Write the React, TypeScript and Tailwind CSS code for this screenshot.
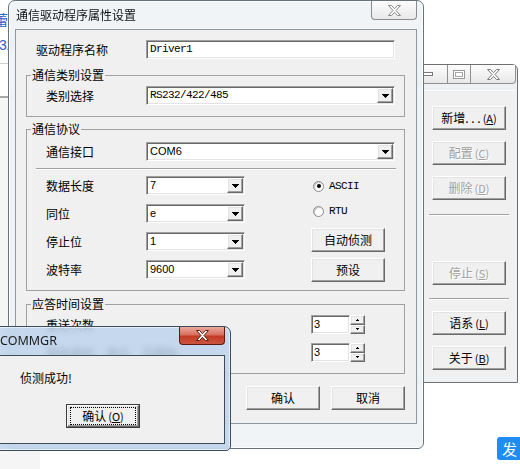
import React from "react";

const cjk = "font-['Noto_Sans_CJK_SC',sans-serif]";
const mono = "font-['Liberation_Mono','Noto_Sans_CJK_SC',monospace] tracking-[-0.6px]";
const ms = "font-['Liberation_Sans','Noto_Sans_CJK_SC',sans-serif]";

const raised =
  "bg-[#f0f0f0] border border-t-white border-l-white border-r-[#696969] border-b-[#696969] shadow-[inset_-1px_-1px_0_#a0a0a0,inset_1px_1px_0_#e3e3e3]";
const sunken =
  "bg-white border border-t-[#a0a0a0] border-l-[#a0a0a0] border-r-white border-b-white shadow-[inset_1px_1px_0_#696969,inset_-1px_-1px_0_#e3e3e3]";

const Mn = ({ k }: { k: string }) => (
  <span className="ml-[2px] text-[11px]">
    (<span className="underline underline-offset-[1px]">{k}</span>)
  </span>
);

const Btn = ({
  children,
  disabled = false,
  className = "",
}: {
  children: React.ReactNode;
  disabled?: boolean;
  className?: string;
}) => (
  <div
    className={`${raised} w-[74px] h-[24px] shrink-0 flex items-center justify-center text-[12px] leading-none ${
      disabled ? "text-[#a0a0a0] [text-shadow:1px_1px_0_#fff]" : "text-black"
    } ${className}`}
  >
    {children}
  </div>
);

const Arrow = () => (
  <svg width="7" height="4" viewBox="0 0 7 4">
    <path d="M0 0h7v1h-1v1h-1v1h-1v1h-1v-1h-1v-1h-1v-1h-1z" fill="#000" />
  </svg>
);

const Combo = ({ value, w, font = ms }: { value: string; w: string; font?: string }) => (
  <div className={`${sunken} ${w} h-[19px] shrink-0 flex p-[1px]`}>
    <div className={`flex-1 flex items-center pl-[2px] text-[11px] leading-none ${font}`}>{value}</div>
    <div className={`${raised} w-[16px] flex items-center justify-center`}>
      <Arrow />
    </div>
  </div>
);

const Radio = ({ checked = false, label, className = "" }: { checked?: boolean; label: string; className?: string }) => (
  <div className={`flex items-center h-[12px] pl-[2px] ${className}`}>
    <div className="w-[11px] h-[11px] rounded-full bg-white border border-[#8a8a8a] shadow-[inset_1px_1px_1px_#c8c8c8] flex items-center justify-center">
      {checked && <div className="w-[4px] h-[4px] rounded-full bg-black" />}
    </div>
    <span className={`ml-[5px] text-[11px] leading-none ${mono}`}>{label}</span>
  </div>
);

const Spin = ({ value }: { value: string }) => (
  <div className="flex h-[19px] shrink-0">
    <div className={`${sunken} w-[39px] flex items-center pl-[2px] text-[11px] ${ms}`}>{value}</div>
    <div className="w-[15px] flex flex-col">
      <div className={`${raised} flex-1 flex items-center justify-center`}>
        <svg width="3" height="2" viewBox="0 0 3 2">
          <path d="M1 0h1v1h1v1h-3v-1h1z" fill="#000" />
        </svg>
      </div>
      <div className={`${raised} flex-1 flex items-center justify-center`}>
        <svg width="3" height="2" viewBox="0 0 3 2">
          <path d="M0 0h3v1h-1v1h-1v-1h-1z" fill="#000" />
        </svg>
      </div>
    </div>
  </div>
);

const L = ({ children, w }: { children: React.ReactNode; w: string }) => (
  <span className={`${w} shrink-0 text-[12px] leading-[14px]`}>{children}</span>
);

const Group = ({ title, className = "", children }: { title: string; className?: string; children: React.ReactNode }) => (
  <fieldset className={`border border-[#a0a0a0] min-w-0 ${className}`}>
    <legend className="ml-[4px] px-[1px] text-[12px] leading-[14px]">{title}</legend>
    {children}
  </fieldset>
);

const XIcon = ({ fill, stroke }: { fill: string; stroke: string }) => (
  <svg width="13" height="11" viewBox="0 0 13 11">
    <path
      d="M0.5 0.5h3l3 3.2 3-3.2h3l-4.5 5 4.5 5h-3l-3-3.2-3 3.2h-3l4.5-5z"
      fill={fill}
      stroke={stroke}
      strokeWidth="1"
      strokeLinejoin="round"
    />
  </svg>
);

const rows: [string, string][] = [
  ["数据长度", "7"],
  ["同位", "e"],
  ["停止位", "1"],
  ["波特率", "9600"],
];

export default function App() {
  return (
    <div className={`relative w-[520px] h-[469px] overflow-hidden bg-white text-black ${cjk}`}>
      {/* window behind, left */}
      <div className="absolute left-0 top-0 w-[40px] h-[469px] bg-white flex flex-col">
        <div className="h-[63px] flex flex-col text-[#2a62c9] text-[14px] leading-[16px]">
          <span className="mt-[11px] -ml-[6px]">蕾</span>
          <span className={`mt-[10px] -ml-[1px] ${ms}`}>32</span>
        </div>
        <div className="h-[33px] border-t border-[#cfcfcf]" />
        <div className="flex-1 border-t-2 border-[#a8a8a8] bg-[#f5f5f5]" />
      </div>

      {/* window behind, right */}
      <div className="absolute left-[380px] top-[64px] w-[138px] h-[319px] border border-[#6f6f6f] rounded-tr-[6px] bg-[#eef1f4] flex flex-col">
        <div className="h-[25px] flex justify-end pr-[1px]">
          <div className="h-[19px] flex border border-t-0 border-[#8f8f8f] rounded-b-[4px] overflow-hidden bg-[linear-gradient(#fcfcfc,#e8e8e8)]">
            <div className="w-[34px] flex items-center justify-start pl-[9px]">
              <svg width="11" height="4" viewBox="0 0 11 4">
                <rect x="0.5" y="0.5" width="10" height="3" fill="#fff" stroke="#7a7a7a" />
              </svg>
            </div>
            <div className="w-[23px] border-l border-[#8f8f8f] flex items-center justify-center">
              <svg width="12" height="9" viewBox="0 0 12 9">
                <rect x="0.5" y="0.5" width="11" height="8" fill="#fff" stroke="#9a9a9a" />
                <rect x="2.5" y="2.5" width="7" height="4" fill="none" stroke="#a8a8a8" />
              </svg>
            </div>
            <div className="w-[45px] border-l border-[#8f8f8f] flex items-center justify-center">
              <XIcon fill="#fff" stroke="#7a7a7a" />
            </div>
          </div>
        </div>
        <div className="flex-1 mr-[2px] mb-[6px] bg-[#f0f0f0] border-t border-white flex flex-col">
          <div className="ml-[51px] mt-[15px] flex flex-col">
            <Btn>
              新增. . .<Mn k="A" />
            </Btn>
            <Btn disabled className="mt-[11px]">
              配置<Mn k="C" />
            </Btn>
            <Btn disabled className="mt-[11px]">
              删除<Mn k="D" />
            </Btn>
          </div>
          <div className="ml-[48px] w-[80px] mt-[14px] border-t border-t-[#a0a0a0] border-b border-b-white" />
          <div className="ml-[51px] mt-[45px]">
            <Btn disabled>
              停止<Mn k="S" />
            </Btn>
          </div>
          <div className="ml-[48px] w-[80px] mt-[13px] border-t border-t-[#a0a0a0] border-b border-b-white" />
          <div className="ml-[51px] mt-[11px] flex flex-col">
            <Btn>
              语系<Mn k="L" />
            </Btn>
            <Btn className="mt-[11px]">
              关于<Mn k="B" />
            </Btn>
          </div>
        </div>
      </div>

      {/* main dialog */}
      <div className="absolute left-[8px] top-0 w-[416px] h-[449px] rounded-t-[7px] rounded-b-[6px] border border-[#66737f] bg-[rgba(238,242,246,0.88)] backdrop-blur-[2px] shadow-[inset_0_0_0_1px_rgba(255,255,255,0.8)] flex flex-col">
        <div className="h-[28px] flex items-start justify-between">
          <span className="ml-[7px] mt-[6px] text-[12px] leading-[16px] text-[#111]">通信驱动程序属性设置</span>
          <div className="mr-[6px] w-[46px] h-[19px] flex items-center justify-center border border-t-0 border-[#8c8c8c] rounded-b-[4px] bg-[linear-gradient(#fcfcfc,#e9e9e9)]">
            <XIcon fill="#fff" stroke="#8a8a8a" />
          </div>
        </div>
        <div className="mx-[6px] h-[395px] border border-[#8d98a3] bg-[#f0f0f0] pl-[10px] pr-[11px] pt-[10px] flex flex-col">
          <div className="flex items-center pl-[10px]">
            <L w="w-[110px]">驱动程序名称</L>
            <div className={`${sunken} w-[249px] h-[19px] flex items-center pl-[3px] text-[11px] ${mono}`}>Driver1</div>
          </div>

          <Group title="通信类别设置" className="mt-[9px] pt-[4px] pb-[11px]">
            <div className="flex items-center pl-[19px]">
              <L w="w-[100px]">类别选择</L>
              <Combo value="RS232/422/485" w="w-[249px]" font={mono} />
            </div>
          </Group>

          <Group title="通信协议" className="mt-[5px] pt-[6px] pb-[8px]">
            <div className="flex items-center pl-[19px]">
              <L w="w-[100px]">通信接口</L>
              <Combo value="COM6" w="w-[249px]" />
            </div>
            <div className="mt-[7px] ml-[9px] mr-[8px] border-t border-t-[#a0a0a0] border-b border-b-white" />
            <div className="mt-[6px] flex">
              <div className="w-[218px] pl-[19px] flex flex-col gap-[9px]">
                {rows.map(([l, v]) => (
                  <div key={l} className="flex items-center">
                    <L w="w-[100px]">{l}</L>
                    <Combo value={v} w="w-[99px]" />
                  </div>
                ))}
              </div>
              <div className="ml-[66px] w-[74px] flex flex-col pt-[4px]">
                <Radio checked label="ASCII" />
                <Radio label="RTU" className="mt-[13px]" />
                <Btn className="mt-[11px]">自动侦测</Btn>
                <Btn className="mt-[6px]">预设</Btn>
              </div>
            </div>
          </Group>

          <Group title="应答时间设置" className="mt-[6px] pt-[4px] pb-[11px]">
            <div className="flex items-center pl-[19px]">
              <L w="w-[265px]">重送次数</L>
              <Spin value="3" />
            </div>
            <div className="mt-[9px] flex items-center pl-[19px]">
              <L w="w-[265px]">接收逾时　单位　百毫秒</L>
              <Spin value="3" />
            </div>
          </Group>

          <div className="mt-[12px] flex justify-end gap-[11px]">
            <Btn>确认</Btn>
            <Btn>取消</Btn>
          </div>
        </div>
      </div>

      {/* message box */}
      <div className="absolute left-[-10px] top-[326px] w-[241px] h-[125px] rounded-tr-[7px] rounded-br-[5px] border border-[#3d4b5a] bg-[rgba(186,210,236,0.8)] backdrop-blur-[3px] shadow-[inset_0_0_0_1px_rgba(255,255,255,0.6)] flex flex-col">
        <div className="h-[28px] flex items-start justify-between">
          <span className="ml-[9px] mt-[6px] text-[12.5px] leading-[16px] text-[#1a1a1a] font-['Noto_Sans',sans-serif]">COMMGR</span>
          <div className="mr-[5px] w-[46px] h-[18px] flex items-center justify-center border border-t-0 border-[#5c1a10] rounded-b-[4px] bg-[linear-gradient(#eaa99c,#d8705f_45%,#c23b22_55%,#cc5440)]">
            <XIcon fill="#fff" stroke="#5a1f16" />
          </div>
        </div>
        <div className="mx-[5px] h-[89px] border border-[#3f4b57] bg-[#f0f0f0] pl-[23px] pt-[14px]">
          <div className="text-[12px] leading-[16px]">侦测成功!</div>
          <div className="mt-[18px] ml-[46px] w-[74px] h-[24px] border border-[#3c3c3c]">
            <div className={`${raised} w-full h-full px-[2px] py-[1px]`}>
              <div className="w-full h-full border border-dotted border-black flex items-center justify-center text-[12px] leading-none">
                确认<Mn k="O" />
              </div>
            </div>
          </div>
        </div>
      </div>

      {/* page button */}
      <div className="absolute left-[497px] top-[437px] w-[40px] h-[23px] rounded-[3px] bg-[#1e8cf0] flex items-center pl-[5px] text-white text-[15px] leading-none">
        发
      </div>
    </div>
  );
}
